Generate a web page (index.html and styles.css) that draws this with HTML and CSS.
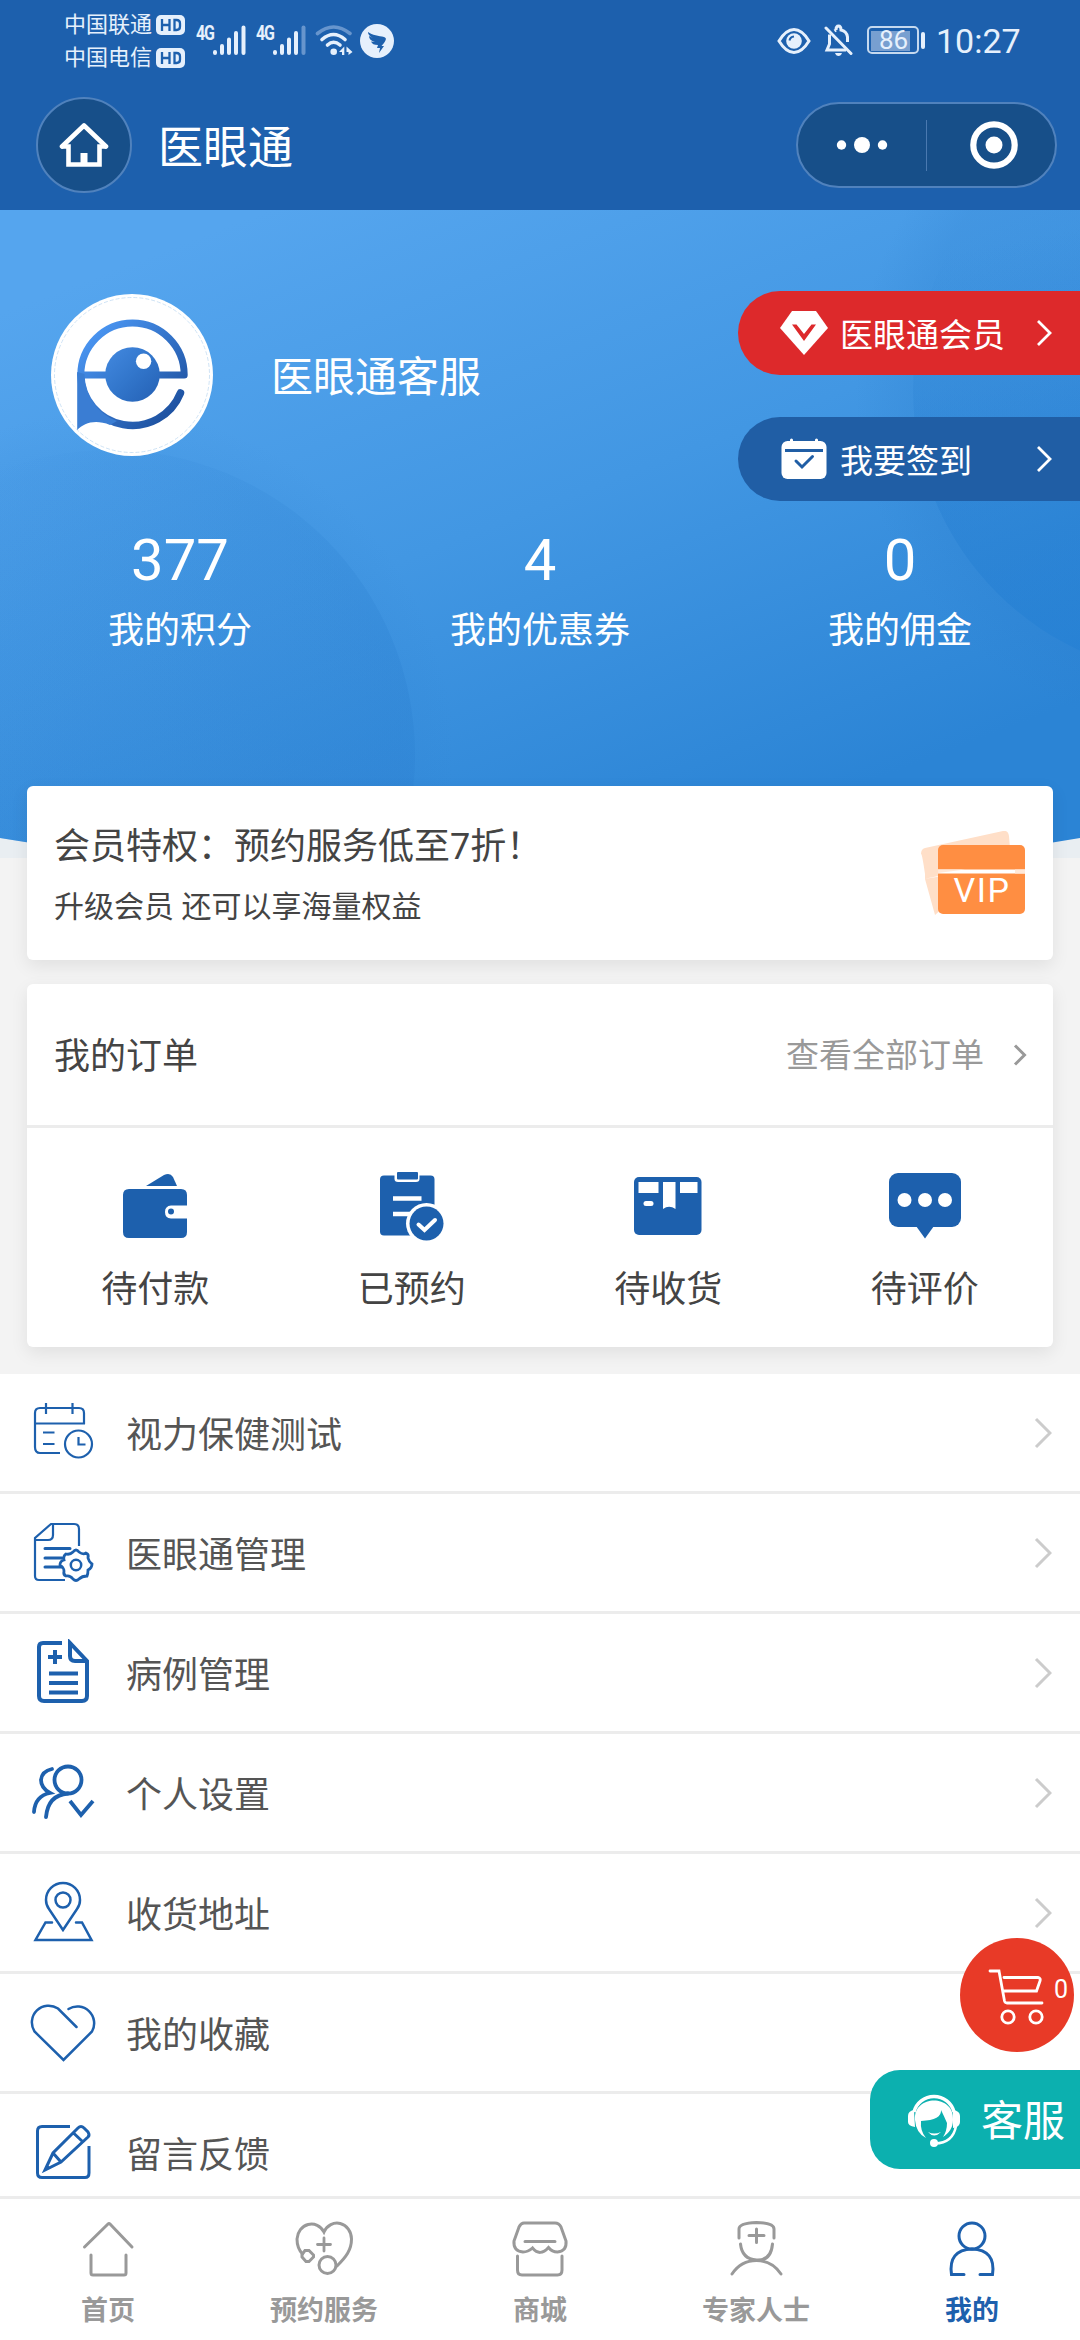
FILE: index.html
```html
<!DOCTYPE html>
<html lang="zh-CN">
<head>
<meta charset="utf-8">
<title>医眼通</title>
<link rel="stylesheet" href="styles.css">
</head>
<body>
<div class="app">
  <header class="top">
    <div class="status">
      <div class="carriers">
        <div class="carrier">中国联通<svg width="29" height="20" viewBox="0 0 29 20"><rect width="29" height="20" rx="5" fill="#e6f0fc"/><path d="M6 4V16M13.5 4V16M6 10H13.5M18.5 5V15H20.5Q24 15 24 11.500V8.500Q24 5 20.500 5Z" fill="none" stroke="#1d60ad" stroke-width="2.300"/></svg></div>
        <div class="carrier">中国电信<svg width="29" height="20" viewBox="0 0 29 20"><rect width="29" height="20" rx="5" fill="#e6f0fc"/><path d="M6 4V16M13.5 4V16M6 10H13.5M18.5 5V15H20.5Q24 15 24 11.500V8.500Q24 5 20.500 5Z" fill="none" stroke="#1d60ad" stroke-width="2.300"/></svg></div>
      </div>
      <div class="signal"><span class="net">4G</span><svg width="34" height="32" viewBox="0 0 34 32"><path d="M3 28V29M10 22V29M17 15.500V29M24 9V29M31.500 3.500V29" stroke="#e6f0fc" stroke-width="4" stroke-linecap="round"/></svg></div>
      <div class="signal"><span class="net">4G</span><svg width="34" height="32" viewBox="0 0 34 32"><path d="M3 28V29M10 22V29M17 15.500V29M24 9V29" stroke="#e6f0fc" stroke-width="4" stroke-linecap="round"/><path d="M31.500 3.500V29" stroke="#6795cd" stroke-width="4" stroke-linecap="round"/></svg></div>
      <svg class="wifi" width="38" height="32" viewBox="0 0 38 32" fill="none" stroke="#e6f0fc" stroke-width="3.600" stroke-linecap="round"><path d="M2.500 9.500Q18.500 -3.500 35 9.500" stroke="#6795cd"/><path d="M7 15.500Q18.500 5.500 30 15.500M12.500 21Q18.500 15.500 25 21"/><circle cx="18.700" cy="27.700" r="3.300" fill="#e6f0fc" stroke="none"/><path d="M24 28L29.300 22.500V31H27V28ZM31.500 22.500L37.500 28L33.500 31V28H31.500Z" fill="#e6f0fc" stroke="none"/></svg>
      <svg class="bird" width="34" height="34" viewBox="0 0 34 34"><circle cx="17" cy="17" r="17" fill="#e6f0fc"/><path d="M8 8C12 11 19 12 24 13C27 14 26 16 24 19L21.500 22H24L19 29L20 24H17L18 21C14 21 12 20 11 17.500L15 18C11 17 9 15 9 12L13 14C9 12 8 10 8 8Z" fill="#1d60ad"/></svg>
      <div class="right-status">
        <svg width="34" height="28" viewBox="0 0 34 28"><path d="M2 14Q9 2.500 17 2.500T32 14Q25 25.500 17 25.500T2 14Z" fill="none" stroke="#e6f0fc" stroke-width="3"/><circle cx="17" cy="14" r="7.800" fill="#e6f0fc"/><path d="M12.500 13.500Q13 10 17 9.500" fill="none" stroke="#1d60ad" stroke-width="2"/></svg>
        <svg class="bell" width="30" height="32" viewBox="0 0 30 32" fill="none" stroke="#e6f0fc" stroke-width="3"><path d="M5.500 10.500V20L3 26H22M12 6Q12 2 14.500 2T17 6Q22.500 7 23.500 13V18M12 6L10.500 7"/><path d="M2 4L27 29.500" stroke-linecap="round"/><path d="M11 29H18Q17 32 14.500 32T11 29Z" fill="#e6f0fc" stroke="none"/></svg>
        <div class="battery"><span>86</span></div>
        <div class="clock">10:27</div>
      </div>
    </div>
    <div class="navbar">
      <div class="home-btn"><svg width="50" height="46" viewBox="0 0 50 46" fill="none" stroke="#fff" stroke-width="4.600"><path d="M3 24.500L25 3.500L47 24.500" stroke-linejoin="round" stroke-linecap="round"/><path d="M3 24.500H9.500V42.500H40.500V24.500H47"/><path d="M25 43V31" stroke-width="7"/></svg></div>
      <h1>医眼通</h1>
      <div class="capsule">
        <svg width="130" height="50" viewBox="0 0 130 50"><g fill="#fff"><circle cx="43.500" cy="25" r="4.700"/><circle cx="64" cy="25" r="8"/><circle cx="84.500" cy="25" r="4.700"/></g></svg>
        <i></i>
        <svg class="target" width="50" height="50" viewBox="0 0 50 50"><circle cx="25" cy="25" r="20.700" fill="none" stroke="#fff" stroke-width="6.200"/><circle cx="25" cy="25" r="8.500" fill="#fff"/></svg>
      </div>
    </div>
  </header>

  <section class="hero">
    <svg class="hero-bg" width="1080" height="648" viewBox="0 0 1080 648">
      <defs>
        <linearGradient id="sky" gradientUnits="userSpaceOnUse" x1="320" y1="-20" x2="590" y2="680"><stop offset="0" stop-color="#55a5ee"/><stop offset=".5" stop-color="#4297e3"/><stop offset="1" stop-color="#2b84d5"/></linearGradient>
        <linearGradient id="ball" x1=".3" y1=".02" x2=".95" y2=".5"><stop offset="0" stop-color="#2a7fd0" stop-opacity="0"/><stop offset="1" stop-color="#2a7fd0" stop-opacity=".3"/></linearGradient>
        <radialGradient id="halo"><stop offset=".84" stop-color="#2b7ccb" stop-opacity=".22"/><stop offset="1" stop-color="#2b7ccb" stop-opacity="0"/></radialGradient>
        <linearGradient id="fade" gradientUnits="userSpaceOnUse" x1="950" y1="40" x2="1020" y2="440"><stop offset="0" stop-color="#2279cc" stop-opacity="0"/><stop offset="1" stop-color="#2480d4" stop-opacity=".6"/></linearGradient>
        <clipPath id="dome"><path d="M0 0H1080V628Q540 720 0 628Z"/></clipPath>
      </defs>
      <rect width="1080" height="648" fill="#e9eef2"/>
      <g clip-path="url(#dome)">
        <rect width="1080" height="648" fill="url(#sky)"/>
        <circle cx="110" cy="545" r="345" fill="url(#halo)" opacity=".45"/>
        <circle cx="110" cy="545" r="305" fill="url(#ball)"/>
        <circle cx="1200" cy="180" r="345" fill="url(#halo)" opacity=".8"/>
        <circle cx="1200" cy="180" r="287" fill="url(#fade)"/>
      </g>
    </svg>
    <div class="profile">
      <svg class="avatar" width="162" height="162" viewBox="0 0 162 162">
        <defs><linearGradient id="logo" x1="0" y1="0" x2="1" y2="1"><stop offset="0" stop-color="#4389e0"/><stop offset=".5" stop-color="#3276cb"/><stop offset="1" stop-color="#2460b4"/></linearGradient>
        <linearGradient id="ring" gradientUnits="userSpaceOnUse" x1="40" y1="35" x2="125" y2="120"><stop offset="0" stop-color="#4b97f4"/><stop offset="1" stop-color="#1d509f"/></linearGradient></defs>
        <circle cx="81" cy="81" r="81" fill="#fff"/>
        <circle cx="81" cy="81" r="77.500" fill="none" stroke="#c3dcf3" stroke-width=".8" stroke-dasharray="4 2"/>
        <path d="M29.800 81A51.700 52 0 0 1 133.200 81V81H29.800" fill="none" stroke="url(#ring)" stroke-width="7" stroke-linejoin="round"/>
        <path d="M29.800 81A51.700 51.500 0 0 0 129.500 99" fill="none" stroke="url(#ring)" stroke-width="7.500" stroke-linecap="round"/>
        <path d="M26.200 78V136C33 129 44 125 59 131L66 127A49 49 0 0 1 33.500 80Z" fill="#3a7dd3"/>
        <circle cx="81.500" cy="80.500" r="27.300" fill="url(#logo)"/>
        <circle cx="92.600" cy="67.300" r="7.700" fill="#fff"/>
      </svg>
      <div class="name">医眼通客服</div>
      <div class="pills">
        <a class="pill vip"><svg width="48" height="44" viewBox="0 0 48 44"><path d="M12 0H36L48 17L24 44L0 17Z" fill="#fff"/><path d="M12 13.500H16.500L24 23L31.500 13.500H36L24 30Z" fill="#dd292b"/></svg><span>医眼通会员</span><svg class="go" width="17" height="28" viewBox="0 0 17 28"><path d="M2 2L14 14L2 26" fill="none" stroke="#fff" stroke-width="2.800"/></svg></a>
        <a class="pill sign"><svg width="48" height="44" viewBox="0 0 48 44"><rect x="1.500" y="4" width="45" height="38" rx="6" fill="#fff"/><path d="M11.500 3V8M36.500 3V8" stroke="#fff" stroke-width="3" stroke-linecap="round"/><path d="M5 13.500H43" stroke="#205ea5" stroke-width="3"/><path d="M16 24L22 30L32.500 19.500" fill="none" stroke="#205ea5" stroke-width="3" stroke-linecap="round"/></svg><span>我要签到</span><svg class="go" width="17" height="28" viewBox="0 0 17 28"><path d="M2 2L14 14L2 26" fill="none" stroke="#fff" stroke-width="2.800"/></svg></a>
      </div>
    </div>
    <div class="stats">
      <div><b>377</b><span>我的积分</span></div>
      <div><b>4</b><span>我的优惠券</span></div>
      <div><b>0</b><span>我的佣金</span></div>
    </div>
  </section>

  <section class="card promo">
    <div class="promo-text">
      <p class="lead">会员特权：预约服务低至7折！</p>
      <p class="sub">升级会员 还可以享海量权益</p>
    </div>
    <svg width="104" height="85" viewBox="0 0 104 85"><path d="M4 17L82 0Q87 -1 88 5L89 17L14 84L4 48V43Q1 22 0 23Q0 18 4 17Z" fill="#ffdfc8"/><path d="M3 48L40 42V38L22 44Z" fill="#fff"/><rect x="17" y="14" width="87" height="69" rx="5" fill="#ff8e42"/><path d="M17 40.500H104" stroke="#fff" stroke-width="4"/><path d="M17 42L44 38.500H17ZM94 38.500H104V42.500H94Z" fill="#ffe8d8"/><text x="61" y="71" text-anchor="middle" class="vip-text">VIP</text></svg>
  </section>

  <section class="card orders">
    <div class="orders-head"><h2>我的订单</h2><span>查看全部订单</span><svg width="14" height="22" viewBox="0 0 14 22"><path d="M2 1.500L11.500 11L2 20.500" fill="none" stroke="#999" stroke-width="3"/></svg></div>
    <div class="orders-grid">
      <div><svg width="80" height="76" viewBox="0 0 80 76" fill="#1d60ad"><path d="M31 18L49 7Q55 4 58 9L62 18Z"/><path d="M14 21H66Q72 21 72 27V37.500H56Q50 38 50 44T56 50.500H72V64Q72 70 66 70H14Q8 70 8 64V27Q8 21 14 21Z"/><circle cx="56" cy="43.500" r="3"/></svg><span>待付款</span></div>
      <div><svg width="80" height="76" viewBox="0 0 80 76"><rect x="8" y="7.500" width="54.500" height="60" rx="4" fill="#1d60ad"/><path d="M22.500 5V11Q22.500 14 26 14H44Q47.500 14 47.500 11V5Z" fill="#fff"/><rect x="25" y="4" width="21" height="7.500" rx="1" fill="#1d60ad"/><path d="M21 30.500H49.500M21 46H39" stroke="#fff" stroke-width="4.500"/><circle cx="54.500" cy="55.500" r="20.500" fill="#fff"/><circle cx="54.500" cy="55.500" r="17" fill="#1d60ad"/><path d="M46.500 56.500L52.500 62L63 52" fill="none" stroke="#fff" stroke-width="4" stroke-linecap="round"/></svg><span>已预约</span></div>
      <div><svg width="80" height="76" viewBox="0 0 80 76"><rect x="6" y="9" width="67.500" height="58" rx="5" fill="#1d60ad"/><path d="M10.500 14H30.500V25H10.500ZM35 14H47.500V41Q41 36.500 35 41ZM52 14H69.500V25H52Z" fill="#fff"/><path d="M18 35.500H23" stroke="#fff" stroke-width="5" stroke-linecap="round"/></svg><span>待收货</span></div>
      <div><svg width="80" height="76" viewBox="0 0 80 76"><rect x="4" y="5" width="72" height="54" rx="9" fill="#1d60ad"/><path d="M31 58L40 70.500L49 58Z" fill="#1d60ad"/><g fill="#fff"><circle cx="19.500" cy="32" r="7"/><circle cx="40" cy="32" r="7"/><circle cx="60" cy="32" r="7"/></g></svg><span>待评价</span></div>
    </div>
  </section>

  <ul class="menu">
    <li><svg class="ico" viewBox="0 0 72 72" stroke-width="2.200"><path d="M55 25V14Q55 9 50 9H11Q6 9 6 14V48Q6 54 11 54H31M6 24.500H56M17 4V15M43.500 4V15M14 33.500H25.500M14 45H25.500"/><circle cx="49.500" cy="45" r="13.500"/><path d="M49.500 38V45.500H56.500"/></svg><span>视力保健测试</span><svg class="arrow" viewBox="0 0 18 32"><path d="M2 2L16 16L2 30"/></svg></li>
    <li><svg class="ico" viewBox="0 0 72 72" stroke-width="2.200"><path d="M50 27V10Q50 5 45 5H22L6 19V57Q6 61 10 61H36M24 5V16Q24 21 19 21H6"/><path d="M16 29.500H41M16 39H33M16 48H33" stroke-width="3" stroke-linecap="round"/><path d="M44 33Q47 29 50 33Q54 36 57 34Q60 35 59 39Q60 43 63 45Q63 49 59 51Q59 55 58 57Q53 57 50 60Q47 63 44 60Q41 56 37 57Q34 56 35 52Q35 49 31 46Q31 42 35 41Q34 37 37 35Q41 36 44 33Z" stroke-width="2.800"/><circle cx="47" cy="46" r="5.200" stroke-width="2.500"/></svg><span>医眼通管理</span><svg class="arrow" viewBox="0 0 18 32"><path d="M2 2L16 16L2 30"/></svg></li>
    <li><svg class="ico" viewBox="0 0 72 72" stroke-width="4"><path d="M33 4H14Q10 4 10 8V57Q10 62 15 62H53Q58 62 58 57V22L41 4V17Q41 22 46 22H57M19 18H33M26 11V25M20 34.500H49M20 44H49M20 53.500H49"/></svg><span>病例管理</span><svg class="arrow" viewBox="0 0 18 32"><path d="M2 2L16 16L2 30"/></svg></li>
    <li><svg class="ico" viewBox="0 0 72 72" stroke-width="3.800" stroke-linecap="round"><circle cx="39" cy="21" r="13.500"/><path d="M23 10Q13 12 12 21Q12 29 21 34Q6 37 5 53M39 34.500Q19 36 17 58"/><path d="M41 42L52 56L64 42" stroke-linecap="butt"/></svg><span>个人设置</span><svg class="arrow" viewBox="0 0 18 32"><path d="M2 2L16 16L2 30"/></svg></li>
    <li><svg class="ico" viewBox="0 0 72 72" stroke-width="2.500" stroke-linecap="round"><path d="M34 51L20 30Q17 26 17 21A17 17 0 0 1 51 21Q51 26 48 30ZM23 43.500H16.500L6.500 61H62.500L53 43.500H47"/><circle cx="34" cy="21" r="7.500"/></svg><span>收货地址</span><svg class="arrow" viewBox="0 0 18 32"><path d="M2 2L16 16L2 30"/></svg></li>
    <li><svg class="ico" viewBox="0 0 72 72" stroke-width="2.500" stroke-linecap="round"><path d="M47.500 28L29 9.500A16.800 16.800 0 0 0 5.500 32.500L34.500 61L63 32.500A16.800 16.800 0 0 0 39.500 10"/></svg><span>我的收藏</span><svg class="arrow" viewBox="0 0 18 32"><path d="M2 2L16 16L2 30"/></svg></li>
    <li><svg class="ico" viewBox="0 0 72 72" stroke-width="3"><path d="M41 7.500H13Q8.500 7.500 8.500 12V54Q8.500 58.500 13 58.500H56Q60 58.500 60 54V27M49 9Q52 6 55 9L59 13Q61 16 59 18L32 43L16 51L24 34ZM44.500 14L54 23M24 34L32 43"/><path d="M15 52L17.500 45.500L22 49Z" fill="#1d60ad" stroke="none"/></svg><span>留言反馈</span></li>
  </ul>

  <nav class="tabs">
    <a><svg viewBox="0 0 60 60"><path d="M6.500 30L30 7Q31 6 32 7L54 30"/><path d="M13 38V56Q13 58 15 58H46Q48 58 48 56V38"/></svg>首页</a>
    <a><svg viewBox="0 0 60 60" stroke-width="2.300"><path d="M8.500 37Q3 31 3 22A14.500 16 0 0 1 30 15A14.500 16 0 0 1 57.500 22C57.500 33 52 40 43 49"/><path d="M30 21V34M23.500 27.500H36.500" stroke-width="2.800"/><circle cx="33.500" cy="48" r="8.500"/><path d="M11 33.500H15L19.500 38V40L15 44.500H12L8 40V37.500Z"/></svg>预约服务</a>
    <a><svg viewBox="0 0 60 60" stroke-width="2.300"><path d="M14 6H45Q49 6 51 10L56 24Q57 34 47.500 35Q42 35 38.500 30.500Q30 40 22.500 31Q18 35 13 35Q3 34 4 24L9 10Q11 6 14 6ZM15 24.500H45M7.500 39V53Q7.500 58 12 58H47.500Q52 58 52 53V39"/></svg>商城</a>
    <a><svg viewBox="0 0 60 60" stroke-width="2.300"><path d="M13 21V12Q13 6 30.500 5.500Q48 6 48 12V21M14.500 27Q16 42 30.500 43T46.500 27M6 57Q15 43.500 30.500 43.500T55 57M30.500 12V25.500M23 18.500H38"/></svg>专家人士</a>
    <a class="on"><svg viewBox="0 0 60 60" stroke-width="3"><circle cx="30" cy="19" r="13"/><path d="M22 57.500H9.500Q6 33 30 32Q54 33 50.500 57.500H38"/></svg>我的</a>
  </nav>

  <div class="cart"><svg width="58" height="60" viewBox="0 0 58 60" fill="none" stroke="#fff" stroke-width="2.800" stroke-linecap="round"><path d="M2 4H11L16.500 34Q17 36 19 36H54M16 10.500H50Q53 11 52 14L48.500 24H15"/><circle cx="20" cy="50" r="6.200"/><circle cx="48" cy="50" r="6.200"/></svg><span>0</span></div>
  <div class="service"><svg width="54" height="56" viewBox="0 0 54 56"><path d="M7 20A20.500 20 0 0 1 47 20" fill="none" stroke="#fff" stroke-width="3.500"/><path d="M7 18Q1 19 1 24V30Q1 34 8 35ZM46 18Q53 19 53 24V30Q53 35 46 36Z" fill="#fff"/><path d="M8 28C6 2 48 2 46 28C46 36 42 41 36 45Q40 39 40 31Q37 24 34 18Q35 28 14 29Q13 39 19 46Q9 41 8 28Z" fill="#fff"/><path d="M21 40Q27 43 34 40Q27 47 21 40Z" fill="#fff"/><path d="M49 34Q46 51 28 51.500" fill="none" stroke="#fff" stroke-width="2.500"/><circle cx="27" cy="51" r="4" fill="#fff"/></svg><span>客服</span></div>
</div>
</body>
</html>
```
FILE: styles.css
```css
* { box-sizing: border-box; margin: 0; padding: 0; }
body { font-family: Roboto, "Noto Sans CJK SC", sans-serif; background: #f3f3f3; }
svg { display: block; flex: none; }
.app { position: relative; width: 1080px; height: 2340px; overflow: hidden; display: flex; flex-direction: column; }

.top { height: 210px; flex: none; background: #1d60ad; color: #fff; }
.status { display: flex; height: 84px; padding: 8px 62px 0 64px; color: #e6f0fc; }
.carriers { width: 132px; }
.carrier { display: flex; align-items: center; gap: 4px; height: 33px; font-size: 22px; line-height: 33px; white-space: nowrap; }
.signal { display: flex; width: 60px; padding-top: 16px; }
.net { width: 16px; font: 700 20px/18px Roboto, sans-serif; letter-spacing: -1.5px; transform: scaleX(.8); transform-origin: left; white-space: nowrap; }
.wifi { margin: 16px 0 0 -1px; }
.bird { margin: 16px 0 0 7px; }
.right-status { margin-left: auto; display: flex; align-items: center; height: 64px; }
.right-status > svg:first-child { margin-top: 1px; }
.bell { margin-left: 13px; }
.battery { position: relative; width: 52px; height: 28px; margin: 0 17px 0 13px; padding: 3px; border: 2px solid #c5d9ef; border-radius: 5px; }
.battery::before { content: ""; display: block; width: 39px; height: 20px; margin-left: -1px; background: #789fd0; }
.battery::after { content: ""; position: absolute; left: 52px; top: 4px; width: 4px; height: 17px; border-radius: 2px; background: #e6f0fc; }
.battery span { position: absolute; left: 10px; top: 0; font-size: 26px; line-height: 25px; }
.clock { font-size: 34px; line-height: 40px; width: 82px; padding-top: 2px; white-space: nowrap; }

.navbar { display: flex; align-items: center; height: 122px; padding: 0 23px 0 36px; }
.home-btn { display: flex; align-items: center; justify-content: center; width: 96px; height: 96px; border: 2px solid #5082bd; border-radius: 50%; background: #174f89; }
h1 { margin-left: 26px; font-size: 45px; font-weight: 400; line-height: 60px; padding-top: 7px; }
.capsule { display: flex; align-items: center; width: 261px; height: 86px; margin-left: auto; border: 2px solid #5082bd; border-radius: 43px; background: #174f89; }
.capsule i { width: 1px; height: 51px; background: #4a79b0; margin-left: -2px; }
.target { margin-left: 42px; }

.hero { position: relative; height: 648px; flex: none; color: #fff; }
.hero-bg { position: absolute; left: 0; top: 0; }
.profile { position: relative; display: flex; padding: 81px 0 0 51px; height: 291px; }
.avatar { margin-top: 3px; }
.name { margin: 57px 0 0 58px; font-size: 42px; line-height: 60px; }
.pills { margin-left: auto; width: 342px; display: flex; flex-direction: column; gap: 42px; }
.pill { display: flex; align-items: center; height: 84px; padding: 0 27px 0 42px; border-radius: 42px 0 0 42px; font-size: 33px; }
.pill span { margin-left: 12px; }
.pill .go { margin-left: auto; }
.vip { background: #dd292b; }
.sign { background: #205ea5; }
.stats { position: relative; display: grid; grid-template-columns: repeat(3, 1fr); text-align: center; padding-top: 29px; }
.stats b { display: block; font-size: 58px; font-weight: 400; line-height: 60px; }
.stats span { display: block; margin-top: 14px; font-size: 36px; line-height: 54px; }

.card { position: relative; margin: 0 27px; flex: none; background: #fff; border-radius: 6px; box-shadow: 0 6px 18px rgba(0, 0, 0, .08); color: #444; }
.promo { display: flex; justify-content: space-between; height: 174px; margin-top: -72px; padding: 0 28px 0 27px; }
.promo svg { margin-top: 45px; }
.lead { margin-top: 34px; font-size: 36px; line-height: 54px; }
.sub { margin-top: 9px; font-size: 30px; line-height: 48px; }
.vip-text { font: 34px Roboto, sans-serif; letter-spacing: 1.5px; fill: #fff; }
.orders { margin-top: 24px; height: 363px; }
.orders-head { display: flex; align-items: center; height: 144px; padding: 0 26px 0 27px; border-bottom: 3px solid #ececec; }
h2 { flex: 1; padding-top: 5px; font-size: 36px; font-weight: 400; line-height: 54px; }
.orders-head span { margin-right: 29px; padding-top: 3px; font-size: 33px; line-height: 50px; color: #999; }
.orders-grid { display: grid; grid-template-columns: repeat(4, 1fr); padding-top: 40px; }
.orders-grid div { display: flex; flex-direction: column; align-items: center; font-size: 36px; line-height: 54px; }
.orders-grid span { margin-top: 19px; }

.menu { flex: 1; min-height: 0; margin-top: 27px; overflow: hidden; list-style: none; background: #fff; }
.menu li { display: flex; align-items: center; height: 120px; padding: 0 28px 0 29px; border-bottom: 3px solid #ececec; font-size: 36px; line-height: 54px; color: #555; }
.menu span { flex: 1; margin-left: 25px; padding-top: 6px; }
.ico { width: 72px; height: 72px; margin-top: 4px; fill: none; stroke: #1d60ad; }
.arrow { width: 18px; height: 32px; fill: none; stroke: #ccc; stroke-width: 3; }

.tabs { flex: none; display: grid; grid-template-columns: repeat(5, 1fr); height: 144px; border-top: 3px solid #ececec; background: #fff; color: #999; }
.tabs a { display: flex; flex-direction: column; align-items: center; padding-top: 18px; font-size: 27px; font-weight: 700; line-height: 36px; }
.tabs svg { width: 60px; height: 60px; margin-bottom: 16px; fill: none; stroke: #999; stroke-linecap: round; stroke-width: 3; }
.tabs .on { color: #1d60ad; }
.tabs .on svg { stroke: #1d60ad; }

.cart { position: absolute; left: 960px; top: 1938px; display: flex; width: 114px; height: 114px; padding: 29px 0 0 28px; border-radius: 50%; background: #e83a27; color: #fff; }
.cart span { margin: 8px 0 0 8px; font-size: 25px; line-height: 30px; }
.service { position: absolute; right: 0; top: 2070px; display: flex; align-items: center; gap: 20px; width: 210px; height: 99px; padding-left: 37px; border-radius: 30px 0 0 30px; background: #0cb0af; color: #fff; font-size: 42px; line-height: 60px; white-space: nowrap; }
.service span { padding-top: 5px; }
```
